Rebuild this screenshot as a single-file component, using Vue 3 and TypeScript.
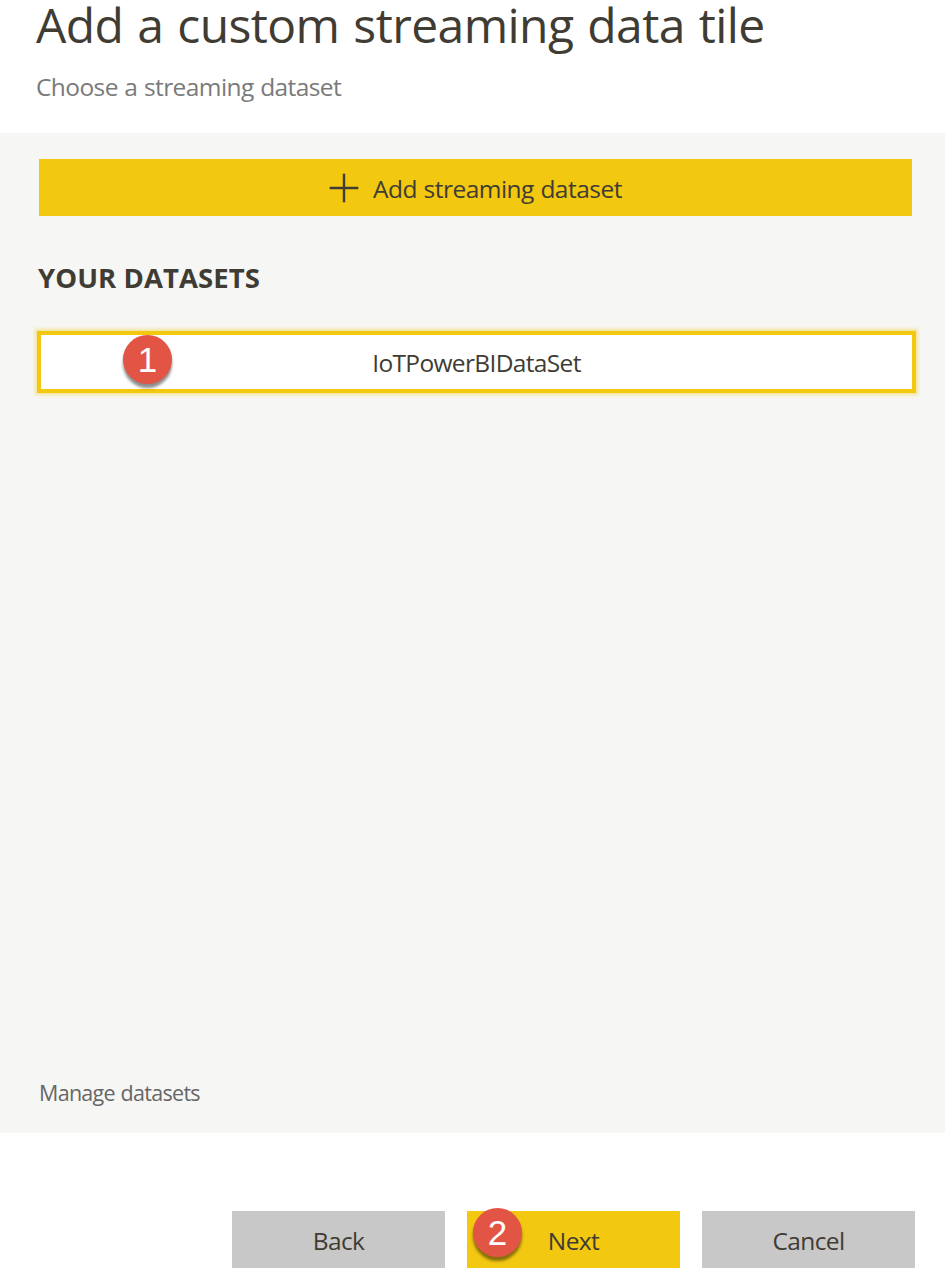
<script setup lang="ts">
import { ref } from 'vue'

interface Dataset {
  name: string
  step: number
}

const datasets: Dataset[] = [{ name: 'IoTPowerBIDataSet', step: 1 }]
const selected = ref<string>('IoTPowerBIDataSet')
</script>

<template>
  <div class="dialog">
    <header class="header">
      <h1 class="title">Add a custom streaming data tile</h1>
      <p class="subtitle">Choose a streaming dataset</p>
    </header>

    <main class="content">
      <button class="add" type="button">
        <svg class="plus" width="30" height="30" viewBox="0 0 30 30" aria-hidden="true">
          <path d="M15 0.7V29.3M0.7 15H29.3" fill="none" stroke="#403c34" stroke-width="2.4" />
        </svg>
        <span class="add-label">Add streaming dataset</span>
      </button>

      <h2 class="section">YOUR DATASETS</h2>

      <button
        v-for="item in datasets"
        :key="item.name"
        type="button"
        class="dataset"
        :class="{ selected: selected === item.name }"
        @click="selected = item.name"
      >
        <span class="dataset-label">{{ item.name }}</span>
        <span class="badge badge-one">{{ item.step }}</span>
      </button>

      <a class="manage">Manage datasets</a>
    </main>

    <footer class="footer">
      <button class="action" type="button"><span class="label">Back</span></button>
      <button class="action primary" type="button">
        <span class="label">Next</span>
        <span class="badge badge-two">2</span>
      </button>
      <button class="action" type="button"><span class="label">Cancel</span></button>
    </footer>
  </div>
</template>

<style>
body {
  margin: 0;
  background: #fff;
}
</style>

<style scoped>
.dialog {
  display: flex;
  flex-direction: column;
  width: 945px;
  height: 1269px;
  background: #fff;
  color: #403c34;
  font-family: 'Open Sans', 'Noto Sans', sans-serif;
  white-space: nowrap;
}
.header {
  box-sizing: border-box;
  height: 133px;
  padding-left: 36px;
}
.title {
  margin: 0;
  font-size: 48px;
  font-weight: 400;
  line-height: 49px;
  letter-spacing: -0.58px;
  word-spacing: 2px;
}
.subtitle {
  margin: 22px 0 0;
  font-size: 24.5px;
  line-height: 32px;
  letter-spacing: -0.58px;
  word-spacing: 0.7px;
  color: #7a7a7a;
}
.content {
  box-sizing: border-box;
  display: flex;
  flex-direction: column;
  height: 1000px;
  padding: 26px 29px 0 36px;
  background: #f6f6f4;
}
button {
  position: relative;
  box-sizing: border-box;
  display: flex;
  align-items: center;
  justify-content: center;
  padding: 0;
  border: 0;
  font: inherit;
  font-size: 24.5px;
  color: #403c34;
}
.add {
  height: 57px;
  margin: 0 4px 0 3px;
  gap: 14px;
  background: #f2c811;
}
.add-label {
  padding-top: 2px;
  letter-spacing: -0.52px;
  word-spacing: 0.7px;
}
.section {
  margin: 43px 0 0 2px;
  font-size: 27.5px;
  font-weight: 700;
  line-height: 38px;
  letter-spacing: 0.08px;
}
.dataset {
  height: 62px;
  margin-top: 34px;
  margin-left: 1px;
  background: #fff;
}
.dataset-label {
  letter-spacing: -0.65px;
}
.dataset.selected {
  border: 4px solid #f2c811;
  box-shadow: 0 0 3px 2px rgba(242, 200, 17, 0.4);
}
.manage {
  margin: auto 0 24px 3px;
  font-size: 21.5px;
  line-height: 32px;
  letter-spacing: -0.7px;
  word-spacing: 0.7px;
  color: #666;
}
.footer {
  display: flex;
  justify-content: flex-end;
  gap: 22px;
  padding: 78px 30px 0 0;
}
.action {
  width: 213px;
  height: 57px;
  background: #c8c8c8;
}
.label {
  padding-top: 2px;
  letter-spacing: -0.6px;
}
.primary {
  background: #f2c811;
}
.badge {
  position: absolute;
  width: 49px;
  height: 49px;
  border-radius: 50%;
  background: #e25544;
  color: #fff;
  font-family: 'Liberation Sans', Arial, sans-serif;
  font-size: 35px;
  line-height: 50px;
  text-align: center;
  box-shadow: 0 4px 3px rgba(0, 0, 0, 0.45);
}
.badge-one {
  left: 82px;
  top: 0;
}
.badge-two {
  left: 6px;
  top: -3px;
}
</style>
